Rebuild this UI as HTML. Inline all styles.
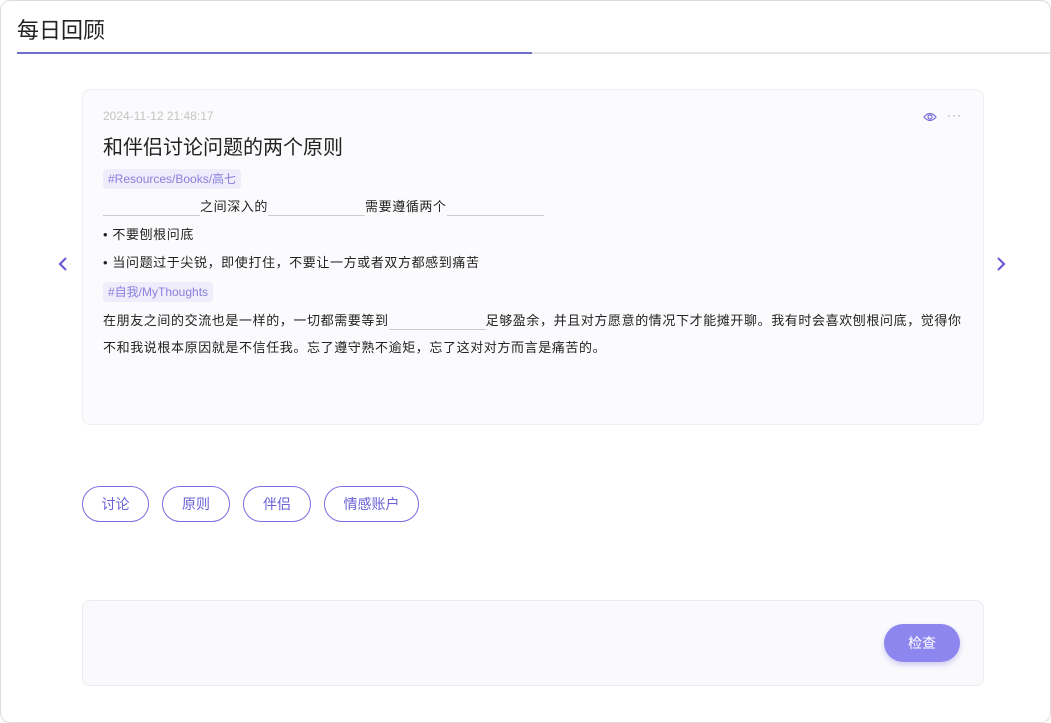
<!DOCTYPE html>
<html><head><meta charset="utf-8"><style>
*{box-sizing:border-box;margin:0;padding:0}
body{width:1051px;height:723px;background:#fff;font-family:"Liberation Sans","Noto Sans CJK SC",sans-serif;position:relative;overflow:hidden;color:#222}
.frame{position:absolute;left:0;top:0;width:1051px;height:723px;border:1px solid #dcdcdc;border-radius:10px}
.title{position:absolute;left:17px;top:13px;font-size:22px;color:#222}
.ul1{position:absolute;left:17px;top:52px;width:515px;height:2px;background:#6f6fcf}
.ul2{position:absolute;left:532px;top:52px;width:518px;height:2px;background:#e6e6e6}
.card{position:absolute;left:82px;top:89px;width:902px;height:336px;background:#fbfbfd;border:1px solid #efeff3;border-radius:8px}
.abs{position:absolute;white-space:nowrap}
.date{left:20px;top:19px;font-size:12px;color:#c4c4c4}
.h{left:20px;top:41px;font-size:20px;color:#222}
.tag{height:20px;line-height:20px;padding:0 5px;background:#efecfb;color:#8a80dc;font-size:12px;border-radius:4px}
.t{font-size:13px;color:#222;letter-spacing:0.6px}
.blank{display:inline-block;width:97px;border-bottom:1px solid #ccc;height:17px;vertical-align:-5px}
.chip{position:absolute;top:486px;height:36px;line-height:34px;border:1px solid #7b6fe0;border-radius:18px;color:#6b5fd6;font-size:14px;text-align:center}
.box{position:absolute;left:82px;top:600px;width:902px;height:86px;background:#fafafc;border:1px solid #ececf0;border-radius:8px}
.btn{position:absolute;left:884px;top:624px;width:76px;height:38px;border-radius:19px;background:#8e86ef;color:#fff;font-size:14px;line-height:38px;text-align:center;box-shadow:0 3px 6px rgba(110,100,220,.3)}
</style></head><body>
<div class="frame"></div>
<div class="title">每日回顾</div>
<div class="ul1"></div><div class="ul2"></div>
<svg class="abs" style="left:57px;top:256px" width="12" height="16" viewBox="0 0 12 16"><path d="M9 2 L3 8 L9 14" fill="none" stroke="#6b5fd6" stroke-width="2.2"/></svg>
<svg class="abs" style="left:995px;top:256px" width="12" height="16" viewBox="0 0 12 16"><path d="M3 2 L9 8 L3 14" fill="none" stroke="#6b5fd6" stroke-width="2.2"/></svg>
<div class="card">
<div class="abs date">2024-11-12 21:48:17</div>
<svg class="abs" style="left:840px;top:21px" width="14" height="12" viewBox="0 0 14 12"><path d="M1 6 Q7 -1 13 6 Q7 13 1 6Z" fill="none" stroke="#7b6fe0" stroke-width="1.2"/><circle cx="7" cy="6" r="2" fill="none" stroke="#7b6fe0" stroke-width="1.2"/></svg>
<div class="abs" style="left:864px;top:18px;font-size:12px;color:#999;letter-spacing:1px">···</div>
<div class="abs h">和伴侣讨论问题的两个原则</div>
<div class="abs tag" style="left:20px;top:79px">#Resources/Books/高七</div>
<div class="abs t" style="left:20px;top:106px"><span class="blank"></span>之间深入的<span class="blank"></span>需要遵循两个<span class="blank"></span></div>
<div class="abs t" style="left:20px;top:134px">• 不要刨根问底</div>
<div class="abs t" style="left:20px;top:162px">• 当问题过于尖锐，即使打住，不要让一方或者双方都感到痛苦</div>
<div class="abs tag" style="left:20px;top:192px">#自我/MyThoughts</div>
<div class="abs t" style="left:20px;top:220px">在朋友之间的交流也是一样的，一切都需要等到<span class="blank"></span>足够盈余，并且对方愿意的情况下才能摊开聊。我有时会喜欢刨根问底，觉得你</div>
<div class="abs t" style="left:20px;top:247px">不和我说根本原因就是不信任我。忘了遵守熟不逾矩，忘了这对对方而言是痛苦的。</div>
</div>
<div class="chip" style="left:82px;width:67px">讨论</div>
<div class="chip" style="left:162px;width:68px">原则</div>
<div class="chip" style="left:243px;width:68px">伴侣</div>
<div class="chip" style="left:324px;width:95px">情感账户</div>
<div class="box"></div>
<div class="btn">检查</div>
</body></html>
